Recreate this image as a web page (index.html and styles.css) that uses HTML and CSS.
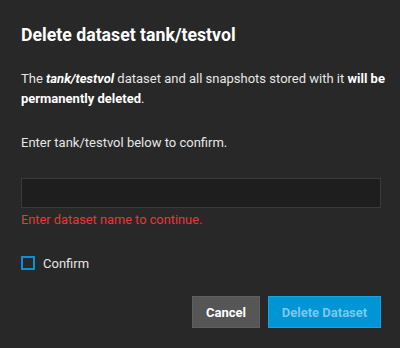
FILE: index.html
```html
<!DOCTYPE html>
<html>
<head>
  <meta charset="UTF-8">
  <title>Delete dataset</title>
  <link rel="stylesheet" href="styles.css">
</head>
<body>
  <div class="dialog">
    <h1 class="dialog-title">Delete dataset tank/testvol</h1>
    <p class="dialog-message">The <strong><em>tank/testvol</em></strong> dataset and all snapshots stored with it <strong>will be permanently deleted</strong>.</p>
    <p class="confirm-hint">Enter tank/testvol below to confirm.</p>
    <div class="field">
      <input class="field-input" type="text">
      <div class="field-error">Enter dataset name to continue.</div>
    </div>
    <label class="checkbox">
      <span class="checkbox-box"></span>
      <span class="checkbox-label">Confirm</span>
    </label>
    <div class="dialog-actions">
      <button class="btn btn-cancel">Cancel</button>
      <button class="btn btn-delete" disabled>Delete Dataset</button>
    </div>
  </div>
</body>
</html>
```

FILE: styles.css
```css
* {
  margin: 0;
  padding: 0;
  box-sizing: border-box;
  font-family: Roboto, 'Noto Sans', sans-serif;
}

html, body {
  height: 100%;
  background: #282828;
  color: #ffffff;
  overflow: hidden;
}

.dialog {
  display: flex;
  flex-direction: column;
  padding: 23px 19px 0 21px;
}

.dialog-title {
  font-size: 17.7px;
  line-height: 24px;
  font-weight: 700;
  color: #ffffff;
}

.dialog-message {
  margin-top: 22px;
  margin-right: -12px;
  font-size: 13px;
  line-height: 20px;
  color: #e6e6e6;
}

.dialog-message strong {
  font-weight: 700;
  color: #ffffff;
}

.confirm-hint {
  margin-top: 24px;
  font-size: 13px;
  line-height: 20px;
  color: #e6e6e6;
}

.field {
  margin-top: 25px;
  display: flex;
  flex-direction: column;
}

.field-input {
  height: 30px;
  background: #1e1e1e;
  border: 1px solid #3a3a3a;
  outline: none;
  color: #ffffff;
  padding: 0 8px;
}

.field-error {
  margin-top: 4px;
  font-size: 12.8px;
  line-height: 16px;
  color: #e53935;
}

.checkbox {
  margin-top: 25px;
  display: flex;
  align-items: center;
  gap: 8px;
  height: 20px;
}

.checkbox-box {
  width: 14px;
  height: 14px;
  border: 2px solid #0095d5;
}

.checkbox-label {
  font-size: 13px;
  color: #e6e6e6;
}

.dialog-actions {
  margin-top: 23px;
  display: flex;
  justify-content: flex-end;
  gap: 8px;
}

.btn {
  height: 32px;
  padding: 0;
  font-size: 13px;
  font-weight: 700;
  white-space: nowrap;
  border: 1px solid transparent;
}

.btn-cancel {
  width: 68px;
  background: #565656;
  border-color: #5f5f5f;
  color: #ffffff;
}

.btn-delete {
  width: 113px;
  background: #0095d5;
  border-color: #19a3df;
  color: #7fc6ea;
}
```
